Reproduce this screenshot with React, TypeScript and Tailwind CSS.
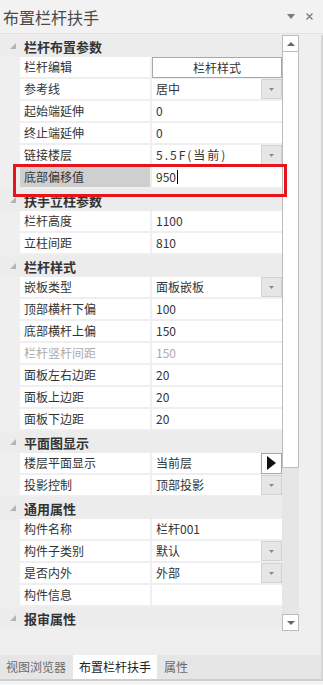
import React from 'react';

type Row =
  | { kind: 'cat'; label: string }
  | {
      kind: 'prop';
      name: string;
      value?: string;
      control?: 'drop' | 'play' | 'button';
      disabled?: boolean;
      selected?: boolean;
      mono?: boolean;
    };

const rows: Row[] = [
  { kind: 'cat', label: '栏杆布置参数' },
  { kind: 'prop', name: '栏杆编辑', value: '栏杆样式', control: 'button' },
  { kind: 'prop', name: '参考线', value: '居中', control: 'drop' },
  { kind: 'prop', name: '起始端延伸', value: '0' },
  { kind: 'prop', name: '终止端延伸', value: '0' },
  { kind: 'prop', name: '链接楼层', value: '5.5F(当前)', control: 'drop', mono: true },
  { kind: 'prop', name: '底部偏移值', value: '950', selected: true },
  { kind: 'cat', label: '扶手立柱参数' },
  { kind: 'prop', name: '栏杆高度', value: '1100' },
  { kind: 'prop', name: '立柱间距', value: '810' },
  { kind: 'cat', label: '栏杆样式' },
  { kind: 'prop', name: '嵌板类型', value: '面板嵌板', control: 'drop' },
  { kind: 'prop', name: '顶部横杆下偏', value: '100' },
  { kind: 'prop', name: '底部横杆上偏', value: '150' },
  { kind: 'prop', name: '栏杆竖杆间距', value: '150', disabled: true },
  { kind: 'prop', name: '面板左右边距', value: '20' },
  { kind: 'prop', name: '面板上边距', value: '20' },
  { kind: 'prop', name: '面板下边距', value: '20' },
  { kind: 'cat', label: '平面图显示' },
  { kind: 'prop', name: '楼层平面显示', value: '当前层', control: 'play' },
  { kind: 'prop', name: '投影控制', value: '顶部投影', control: 'drop' },
  { kind: 'cat', label: '通用属性' },
  { kind: 'prop', name: '构件名称', value: '栏杆001' },
  { kind: 'prop', name: '构件子类别', value: '默认', control: 'drop' },
  { kind: 'prop', name: '是否内外', value: '外部', control: 'drop' },
  { kind: 'prop', name: '构件信息', value: '' },
  { kind: 'cat', label: '报审属性' },
];

function Expander() {
  return (
    <svg width="6" height="6" viewBox="0 0 6 6" className="ml-[10px]">
      <polygon points="6,0 6,6 0,6" fill="#b4b4b4" />
    </svg>
  );
}

function DropBtn() {
  return (
    <div className="flex items-center justify-center w-[21px] h-[20px] bg-[#e6e6e6] border border-[#d2d2d2]">
      <svg width="5" height="3" viewBox="0 0 5 3">
        <polygon points="0,0 5,0 2.5,3" fill="#8a8a8a" />
      </svg>
    </div>
  );
}

function PlayBtn() {
  return (
    <div className="flex items-center justify-center w-[21px] h-[21px] bg-white border border-[#a8a8a8]">
      <svg width="9" height="14" viewBox="0 0 9 14">
        <polygon points="0,0 9,7 0,14" fill="#111" />
      </svg>
    </div>
  );
}

function PropRow({ row }: { row: Extract<Row, { kind: 'prop' }> }) {
  const text = row.disabled ? 'text-[#acacac]' : 'text-[#333]';
  return (
    <div className="flex h-[22px] pl-[20px]">
      <div
        className={`flex items-center w-[130px] h-[20px] pl-[4px] ${
          row.selected ? 'bg-[#cfcfcf]' : 'bg-white'
        } ${text}`}
      >
        {row.name}
      </div>
      <div className="w-[2px]" />
      {row.control === 'button' ? (
        <div className="flex items-center justify-center w-[130px] h-[21px] bg-white border border-[#a8a8a8] text-[#333]">
          {row.value}
        </div>
      ) : (
        <div className={`flex items-center justify-between w-[130px] h-[20px] bg-white pl-[4px] ${text}`}>
          <span className={`flex items-center ${row.mono ? 'tracking-[2px]' : ''}`}>
            {row.value}
            {row.selected && <span className="ml-[1px] w-[1px] h-[14px] bg-black" />}
          </span>
          {row.control === 'drop' && <DropBtn />}
          {row.control === 'play' && <PlayBtn />}
        </div>
      )}
    </div>
  );
}

export default function App() {
  return (
    <div
      className="relative flex flex-col w-[323px] h-[685px] overflow-hidden bg-[#efefef] text-[12px] leading-none"
      style={{ fontFamily: '"Noto Sans CJK SC", "Noto Sans", sans-serif' }}
    >
      {/* title */}
      <div className="flex items-center justify-between h-[34px] pl-[3px] pr-[10px] border-b border-[#e2e2e2] bg-[#f2f2f2]">
        <span className="text-[16px] text-[#4a4a4a]">布置栏杆扶手</span>
        <div className="flex items-center gap-[11px] text-[#7a7a7a]">
          <svg width="8" height="5" viewBox="0 0 8 5">
            <polygon points="0,0 8,0 4,5" fill="#7a7a7a" />
          </svg>
          <svg width="7" height="7" viewBox="0 0 7 7">
            <path d="M0.5 0.5 L6.5 6.5 M6.5 0.5 L0.5 6.5" stroke="#7a7a7a" strokeWidth="1.3" />
          </svg>
        </div>
      </div>

      {/* body */}
      <div className="flex h-[621px] pt-[1px]">
        <div className="flex flex-col w-[282px]">
          {rows.map((r, i) =>
            r.kind === 'cat' ? (
              <div key={i} className="flex items-center h-[22px] bg-[#ececec]">
                <Expander />
                <span className="ml-[8px] text-[13px] font-bold text-[#333]">{r.label}</span>
              </div>
            ) : (
              <PropRow key={i} row={r} />
            )
          )}
        </div>

        {/* scrollbar */}
        <div className="flex flex-col w-[17px] h-[596px] bg-[#e6e6e6]">
          <div className="flex items-center justify-center h-[17px] bg-white border border-[#bcbcbc]">
            <svg width="8" height="4" viewBox="0 0 8 4">
              <polygon points="4,0 8,4 0,4" fill="#666" />
            </svg>
          </div>
          <div className="h-[416px] bg-white border border-[#bcbcbc] border-t-0" />
          <div className="flex-1" />
          <div className="flex items-center justify-center h-[17px] bg-white border border-[#bcbcbc]">
            <svg width="8" height="4" viewBox="0 0 8 4">
              <polygon points="0,0 8,0 4,4" fill="#666" />
            </svg>
          </div>
        </div>
        <div className="flex-1 border-r-2 border-[#d6d6d6]" />
      </div>

      {/* tabs */}
      <div className="flex items-center h-[24px] bg-[#e6e6e6] text-[12px] border-r-2 border-[#d6d6d6]">
        <div className="flex items-center h-full pl-[6px] pr-[7px] text-[#6a6a6a]">视图浏览器</div>
        <div className="flex items-center h-full px-[6px] bg-white text-[#222]">布置栏杆扶手</div>
        <div className="flex items-center h-full px-[7px] text-[#6a6a6a]">属性</div>
      </div>
      <div className="h-[2px] bg-[#cfcfcf]" />
      <div className="flex-1 bg-[#f4f4f4]" />

      {/* highlight box */}
      <div className="absolute left-[13px] top-[164px] w-[274px] h-[33px] border-[3px] border-[#e8141c]" />
    </div>
  );
}
